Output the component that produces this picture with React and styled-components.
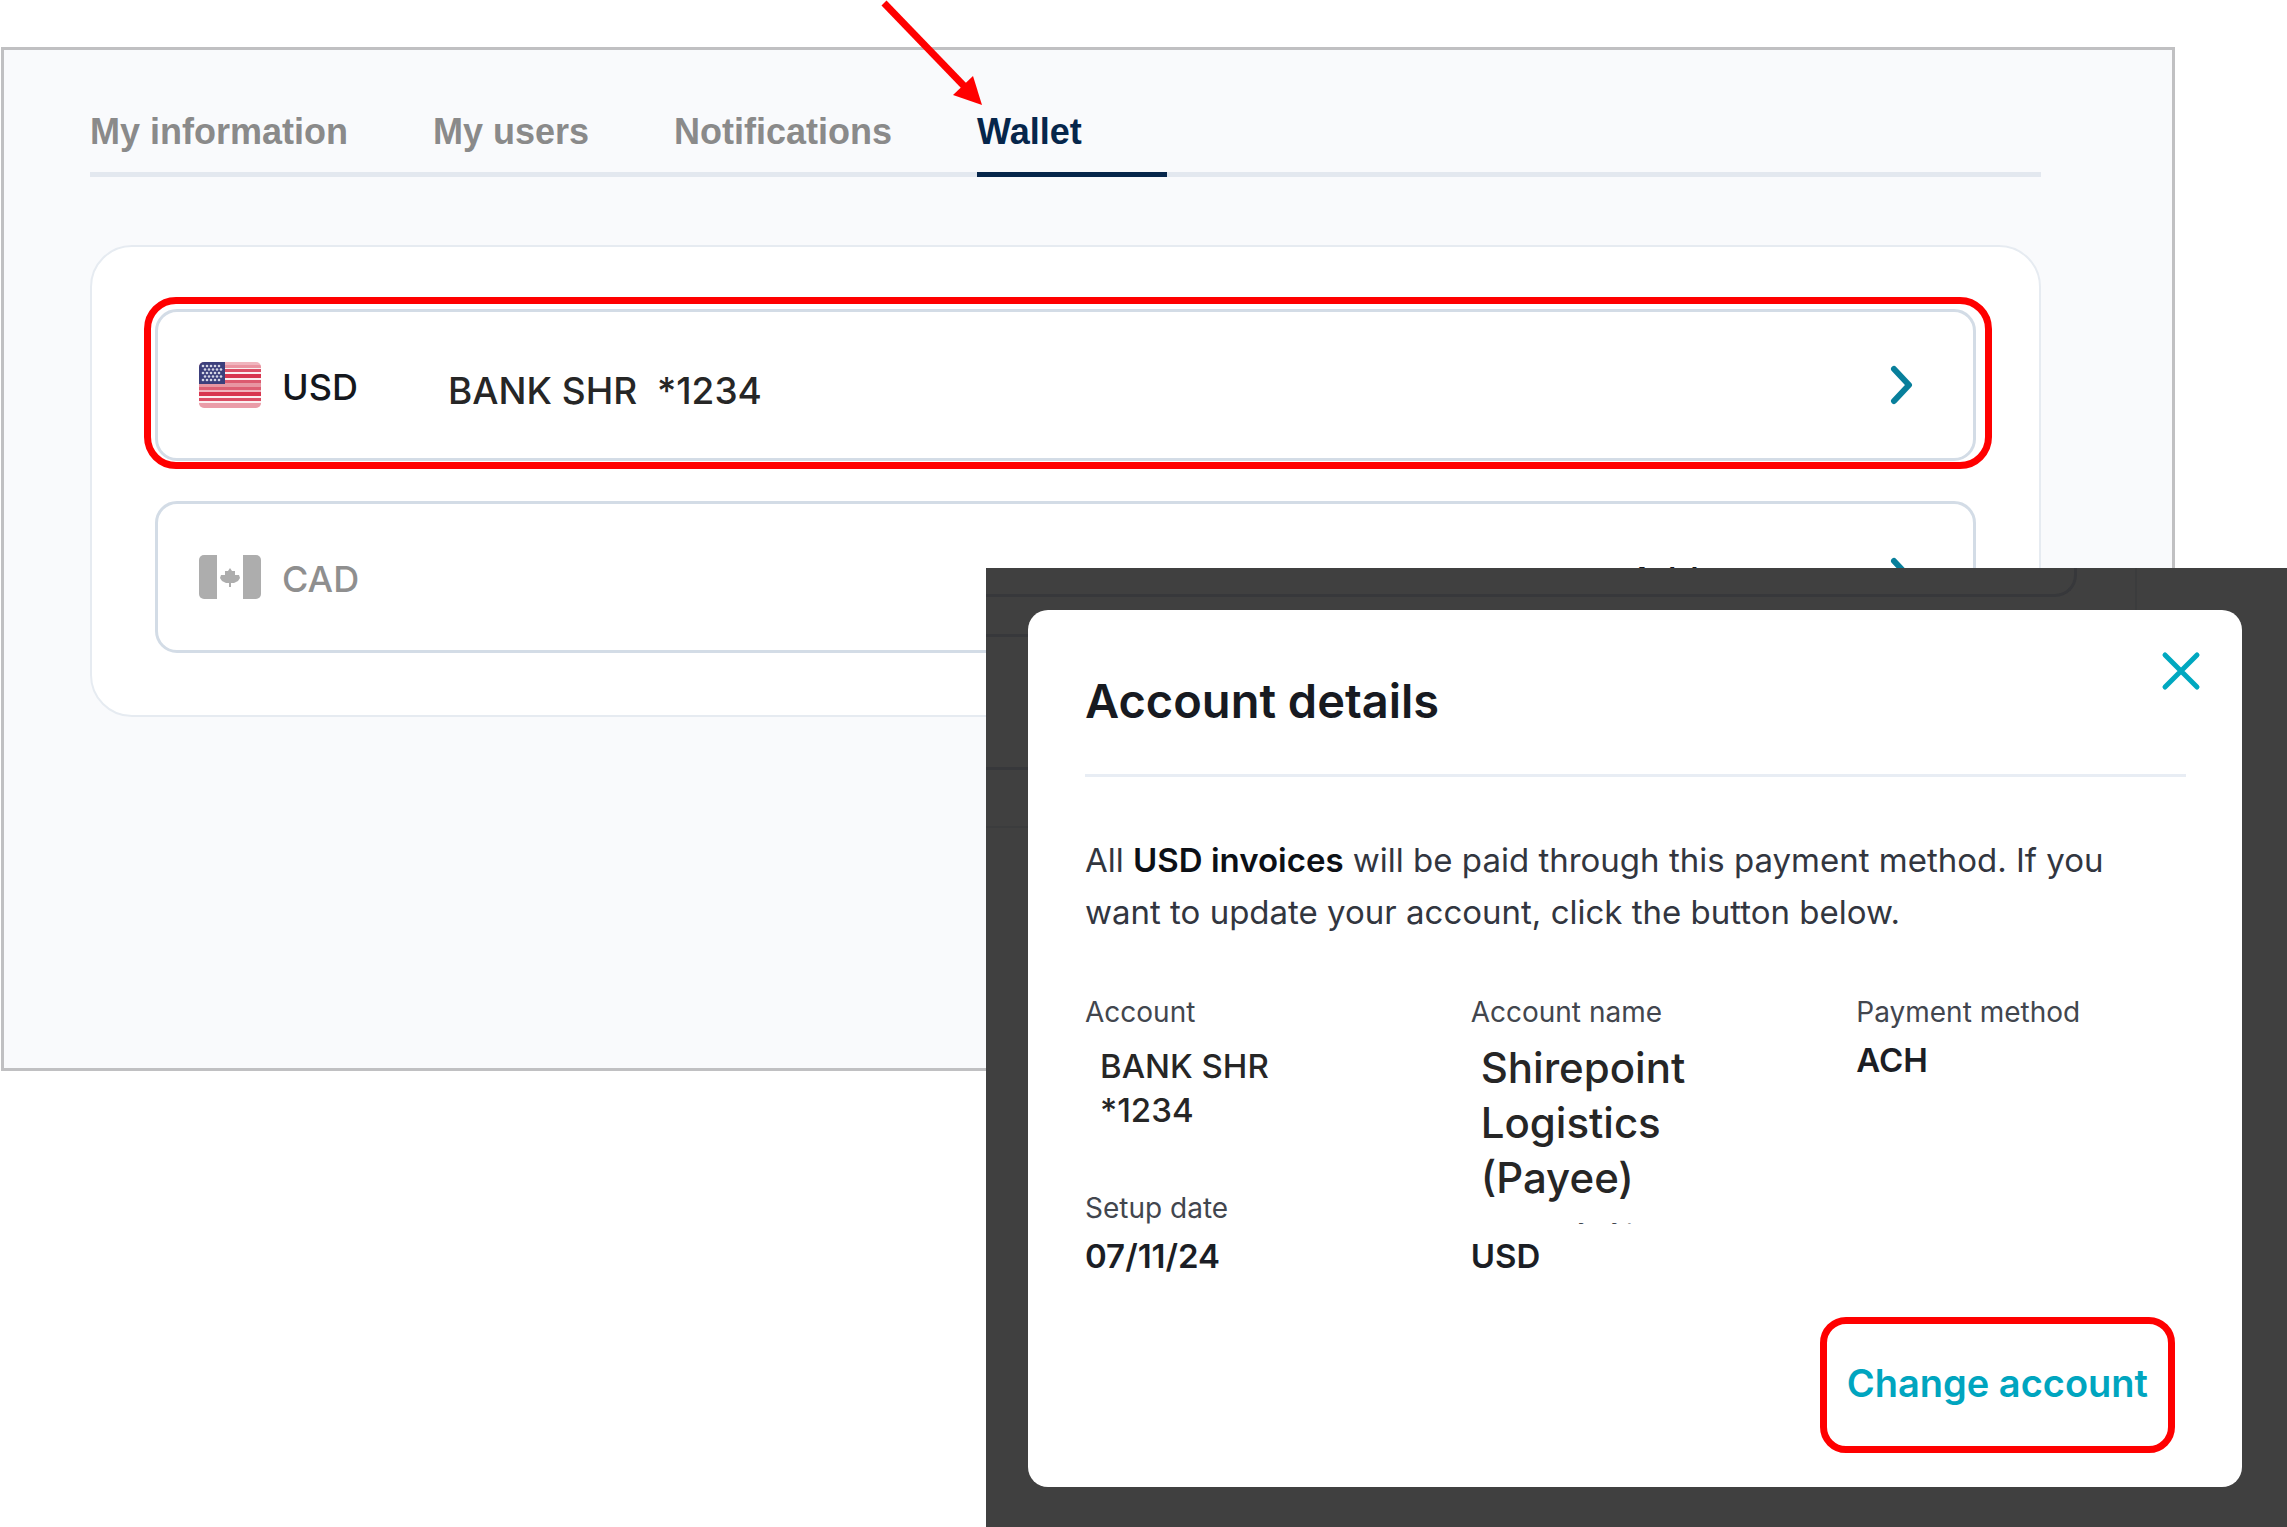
import React, { useState } from "react";
import styled, { createGlobalStyle, css } from "styled-components";

const GlobalStyle = createGlobalStyle`
  * {
    box-sizing: border-box;
  }
  body {
    margin: 0;
    background-color: #ffffff;
    font-family: Inter, sans-serif;
  }
  button {
    border: none;
    background: none;
    padding: 0;
    margin: 0;
    font: inherit;
    color: inherit;
    cursor: pointer;
  }
`;

const StyledPage = styled.div`
  position: relative;
  min-height: 100vh;
  overflow: hidden;
  padding: 47px 112px 0 1px;
`;

const StyledPanel = styled.main`
  min-height: 1024px;
  padding: 62px 131px 60px 86px;
  border: 3px solid #c0c0c2;
  background-color: #f9fafc;
`;

const StyledTabs = styled.div`
  display: flex;
  gap: 85px;
  box-shadow: inset 0 -5px 0 #e3e8ef;
`;

const StyledTab = styled.button`
  position: relative;
  padding-bottom: 20px;
  border-bottom: 5px solid transparent;
  font-family: "Liberation Sans", Arial, sans-serif;
  font-size: 36px;
  font-weight: bold;
  line-height: 40px;
  text-align: left;
  color: #8a8a8a;

  ${({ $active }) =>
    $active &&
    css`
      min-width: 190px;
      color: #06264b;
      border-bottom-color: #06264b;
    `}
`;

const StyledArrow = styled.svg`
  position: absolute;
  top: -112px;
  left: -97px;
  pointer-events: none;
`;

const StyledCard = styled.section`
  display: flex;
  flex-direction: column;
  gap: 40px;
  margin-top: 68px;
  padding: 62px 63px;
  border: 2px solid #e6ebf1;
  border-radius: 42px;
  background-color: #ffffff;
`;

const StyledCurrencyRow = styled.button`
  position: relative;
  display: flex;
  align-items: center;
  width: 100%;
  height: 152px;
  padding: 0 59px 0 41px;
  border: 3px solid #d3dce6;
  border-radius: 22px;
  font-size: 36px;
  text-align: left;
  color: #14171d;

  ${({ $highlighted }) =>
    $highlighted &&
    css`
      &::after {
        content: "";
        position: absolute;
        inset: -15px -19px -11px -14px;
        border: 7px solid #ff0000;
        border-radius: 32px;
      }
    `}
`;

const StyledCode = styled.span`
  min-width: 166px;
  margin-left: 21px;
  padding-top: 4px;
  font-weight: 500;
  color: ${({ $muted }) => ($muted ? "#8f8f8f" : "inherit")};
`;

const StyledBank = styled.span`
  padding-top: 10px;
  font-size: 37px;
  font-weight: 500;
  white-space: pre;
  color: #262626;
`;

const StyledRowAction = styled.span`
  display: flex;
  align-items: center;
  gap: 42px;
  margin-left: auto;
  font-weight: 500;
`;

const StyledActionText = styled.span`
  padding-top: 6px;
`;

const StyledOverlay = styled.div`
  position: absolute;
  top: 568px;
  right: 0;
  bottom: 0;
  left: 986px;
  padding: 42px 45px 40px 42px;
  background-color: #404040;
`;

/* dimmed wallet card that shows around the dialog */
const StyledDimCard = styled.div`
  position: absolute;
  top: 0;
  left: 0;
  right: 150px;
  height: 260px;
  padding-right: 58px;
  border: solid #3b3c3d;
  border-width: 0 2px 2px 0;
`;

const StyledDimRow = styled.div`
  height: ${({ $height }) => $height}px;
  margin-bottom: 37px;
  border: solid #37383b;
  border-width: ${({ $cut }) => ($cut ? "0 3px 3px 0" : "3px 3px 3px 0")};
  border-radius: ${({ $cut }) => ($cut ? "0 0 22px 0" : "0 22px 22px 0")};
`;

const StyledDialog = styled.div`
  position: relative;
  display: flex;
  flex-direction: column;
  min-height: 100%;
  padding: 62px 56px 32px 57px;
  border-radius: 20px;
  background-color: #ffffff;
`;

const StyledTitle = styled.h2`
  margin: 0;
  padding-bottom: 44px;
  border-bottom: 3px solid #e8edf4;
  font-size: 47px;
  font-weight: 600;
  line-height: 58px;
  color: #171a21;
`;

const StyledClose = styled.button`
  position: absolute;
  top: 41px;
  right: 41px;
  width: 40px;
  height: 40px;
`;

const StyledText = styled.p`
  margin: 57px 0 56px;
  font-size: 33px;
  line-height: 52px;
  color: #32363f;

  strong {
    font-weight: 600;
    color: #0c1016;
  }
`;

const StyledDetails = styled.dl`
  display: grid;
  grid-template-columns: repeat(3, 1fr);
  align-items: start;
  gap: 58px 56px;
  margin: 0;
`;

const StyledDetail = styled.div`
  ${({ $covers }) =>
    $covers &&
    css`
      position: relative;
      z-index: 1;
      margin-bottom: -92px;
      padding-bottom: 18px;
      background-color: #ffffff;
    `}
`;

const StyledLabel = styled.dt`
  margin-bottom: 6px;
  font-size: 28px;
  line-height: 36px;
  color: #42464e;
`;

const valueSizes = {
  normal: css`
    font-size: 33px;
    font-weight: 600;
    line-height: 48px;
    color: #1b1e25;
  `,
  bank: css`
    padding: 8px 15px 0;
    font-size: 33px;
    font-weight: 500;
    line-height: 44px;
    color: #262626;
  `,
  name: css`
    padding: 4px 10px 0;
    font-size: 42px;
    font-weight: 500;
    line-height: 55px;
    color: #262626;
  `,
};

const StyledValue = styled.dd`
  margin: 0;
  white-space: pre-line;
  ${({ $size }) => valueSizes[$size]}
`;

const StyledChangeButton = styled.button`
  align-self: flex-end;
  margin: 37px 11px 0 0;
  padding: 36px 20px 40px;
  border: 7px solid #ff0000;
  border-radius: 26px;
  font-size: 38px;
  font-weight: 600;
  line-height: 46px;
  color: #00a5bf;
`;

const tabs = ["My information", "My users", "Notifications", "Wallet"];

const details = [
  { label: "Account", value: "BANK SHR\n*1234", size: "bank" },
  {
    label: "Account name",
    value: "Shirepoint\nLogistics\n(Payee)",
    size: "name",
  },
  { label: "Payment method", value: "ACH", size: "normal" },
  { label: "Setup date", value: "07/11/24", size: "normal" },
  { label: "Currency type", value: "USD", size: "normal" },
];

const stripes = [
  [0, 3, "#f0b4bd"],
  [3, 3, "#ea93a0"],
  [7, 3, "#dc4e65"],
  [12, 4, "#d8354f"],
  [18, 3, "#dc5a6f"],
  [21, 4, "#e896a2"],
  [25, 3, "#dd5f73"],
  [28, 2, "#f0b4bd"],
  [30, 4, "#d8354f"],
  [36, 3, "#dc4e65"],
  [41, 5, "#ea9ca8"],
];

const Arrow = () => (
  <StyledArrow width="110" height="110" viewBox="0 0 110 110" aria-hidden="true">
    <path d="M4 3 L85 87" stroke="#ff0000" strokeWidth="7" />
    <path d="M102 105 L93 76 L73 95 Z" fill="#ff0000" />
  </StyledArrow>
);

const Chevron = () => (
  <svg width="24" height="40" viewBox="0 0 24 40" aria-hidden="true">
    <path
      d="M4 4 L19 20 L4 36"
      fill="none"
      stroke="#087f9b"
      strokeWidth="6"
      strokeLinecap="round"
      strokeLinejoin="round"
    />
  </svg>
);

const UsFlag = () => (
  <svg width="62" height="46" viewBox="0 0 62 46" aria-hidden="true">
    <clipPath id="us">
      <rect width="62" height="46" rx="5" />
    </clipPath>
    <g clipPath="url(#us)">
      <rect width="62" height="46" fill="#fbeef0" />
      {stripes.map(([y, height, fill]) => (
        <rect key={y} y={y} width="62" height={height} fill={fill} />
      ))}
      <rect width="26" height="22" fill="#3c3f7c" />
      {[0, 1, 2, 3, 4].map((row) =>
        [0, 1, 2, 3, 4].map((col) => (
          <circle
            key={`${row}-${col}`}
            cx={4 + col * 4 + (row % 2) * 2}
            cy={4 + row * 3.5}
            r="1.3"
            fill="#d5d6e6"
          />
        ))
      )}
    </g>
  </svg>
);

const CaFlag = () => (
  <svg width="62" height="46" viewBox="0 0 62 46" aria-hidden="true">
    <clipPath id="ca">
      <rect y="1" width="62" height="44" rx="5" />
    </clipPath>
    <g clipPath="url(#ca)" fill="#adadad">
      <rect width="18" height="46" />
      <rect x="44" width="18" height="46" />
      <path d="M31 14 L33 17 L36 17 L36 21 L40 21 L41 24 L39 27 L35 29 L32 29 L32 33 L30 33 L30 29 L27 29 L23 27 L21 24 L22 21 L26 21 L26 17 L29 17 Z" />
    </g>
  </svg>
);

const AccountDialog = () => (
  <StyledOverlay>
    <StyledDimCard>
      <StyledDimRow $height={29} $cut />
      <StyledDimRow $height={136} />
    </StyledDimCard>
    <StyledDialog role="dialog" aria-labelledby="account-details">
      <StyledTitle id="account-details">Account details</StyledTitle>
      <StyledClose aria-label="Close">
        <svg width="40" height="40" viewBox="0 0 40 40" aria-hidden="true">
          <path
            d="M4 4 L36 36 M36 4 L4 36"
            stroke="#00a8c0"
            strokeWidth="5"
            strokeLinecap="round"
          />
        </svg>
      </StyledClose>
      <StyledText>
        All <strong>USD invoices</strong> will be paid through this payment
        method. If you want to update your account, click the button below.
      </StyledText>
      <StyledDetails>
        {details.map(({ label, value, size }) => (
          <StyledDetail key={label} $covers={size === "name"}>
            <StyledLabel>{label}</StyledLabel>
            <StyledValue $size={size}>{value}</StyledValue>
          </StyledDetail>
        ))}
      </StyledDetails>
      <StyledChangeButton>Change account</StyledChangeButton>
    </StyledDialog>
  </StyledOverlay>
);

const App = () => {
  const [activeTab, setActiveTab] = useState("Wallet");
  return (
    <>
      <GlobalStyle />
      <StyledPage>
        <StyledPanel>
          <StyledTabs role="tablist">
            {tabs.map((tab) => (
              <StyledTab
                key={tab}
                role="tab"
                aria-selected={tab === activeTab}
                $active={tab === activeTab}
                onClick={() => setActiveTab(tab)}
              >
                {tab}
                {tab === "Wallet" && <Arrow />}
              </StyledTab>
            ))}
          </StyledTabs>
          <StyledCard>
            <StyledCurrencyRow $highlighted>
              <UsFlag />
              <StyledCode>USD</StyledCode>
              <StyledBank>{"BANK SHR  *1234"}</StyledBank>
              <StyledRowAction>
                <Chevron />
              </StyledRowAction>
            </StyledCurrencyRow>
            <StyledCurrencyRow>
              <CaFlag />
              <StyledCode $muted>CAD</StyledCode>
              <StyledRowAction>
                <StyledActionText>Add account</StyledActionText>
                <Chevron />
              </StyledRowAction>
            </StyledCurrencyRow>
          </StyledCard>
        </StyledPanel>
        <AccountDialog />
      </StyledPage>
    </>
  );
};

export default App;
